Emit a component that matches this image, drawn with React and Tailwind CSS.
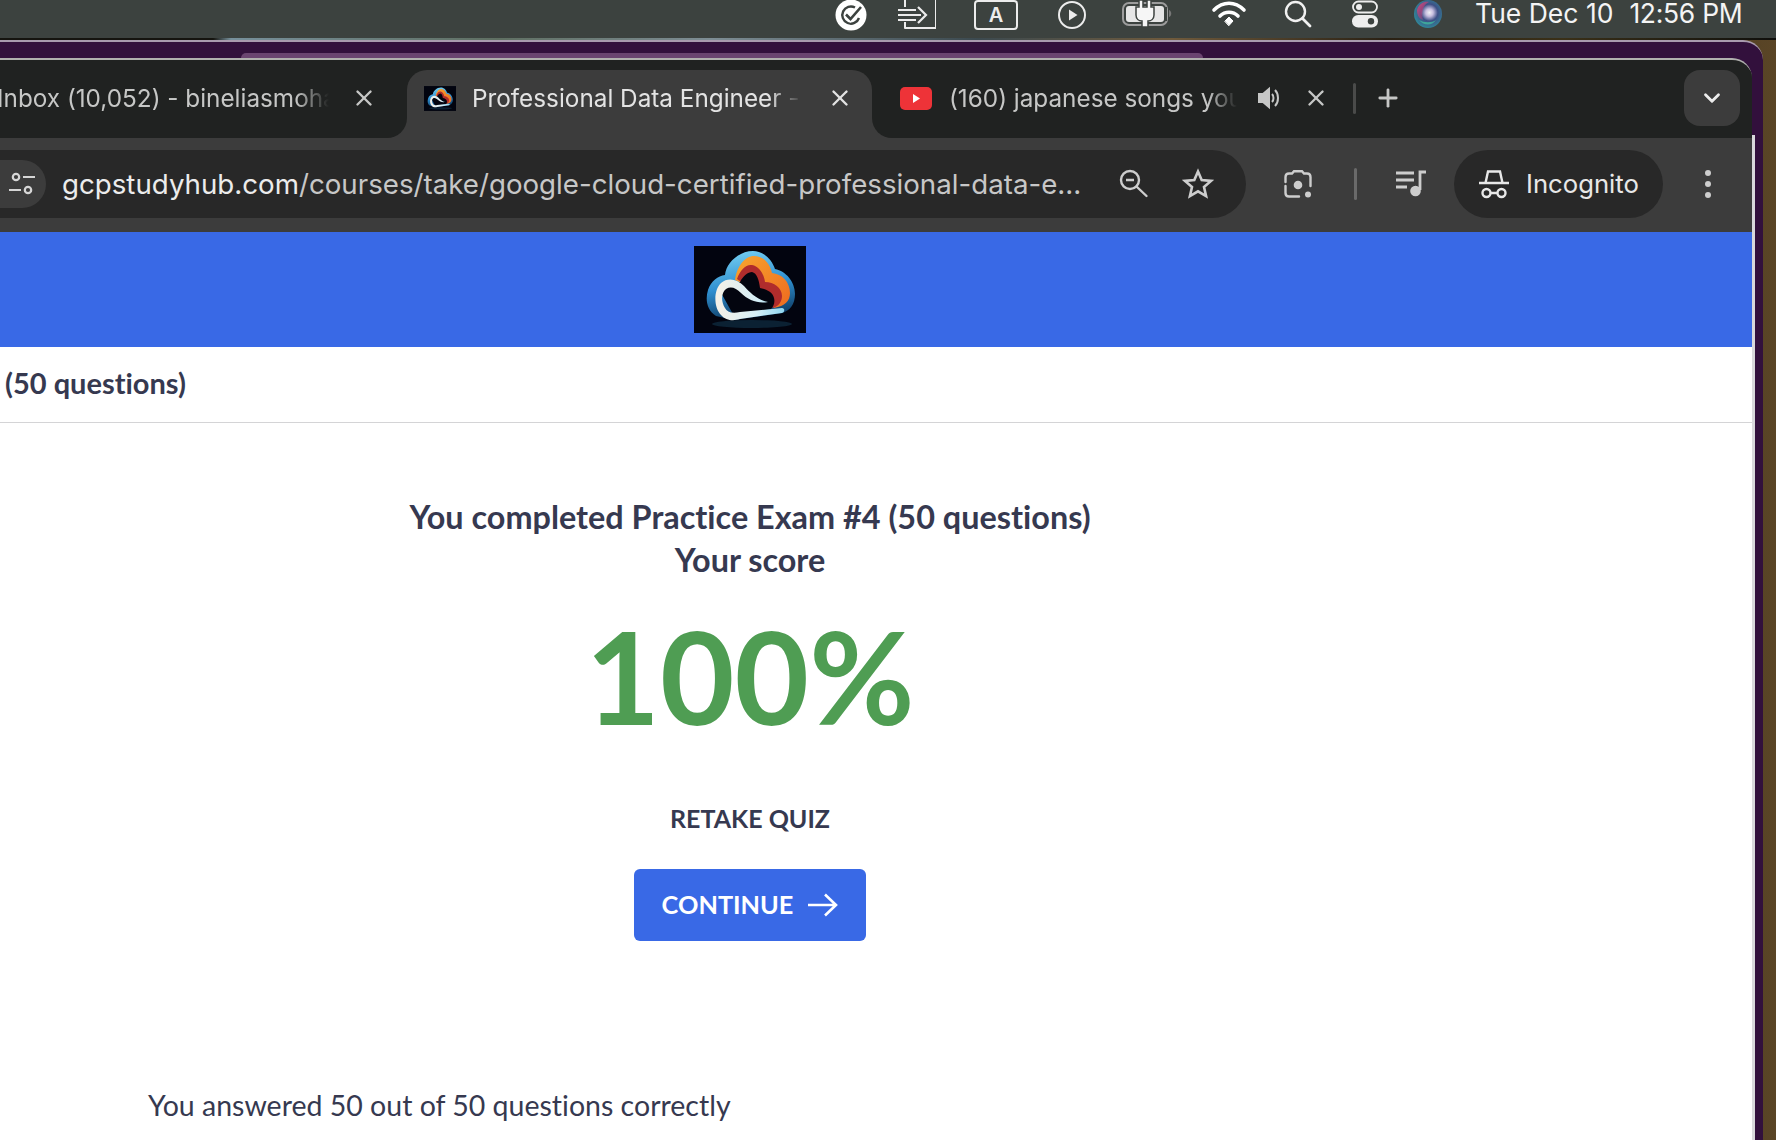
import React from "react";
import { X, Plus, ChevronDown } from "lucide-react";

function Logo({ className, id }) {
  return (
    <svg viewBox="0 0 112 87" className={className}>
      <defs>
        <linearGradient id={id + "b"} x1="0.1" y1="0" x2="0.3" y2="1">
          <stop offset="0" stopColor="#7ad4f5" />
          <stop offset="0.55" stopColor="#2f8fd0" />
          <stop offset="1" stopColor="#0f3f68" />
        </linearGradient>
        <linearGradient id={id + "o"} x1="0" y1="0" x2="1" y2="1">
          <stop offset="0" stopColor="#f8a52e" />
          <stop offset="1" stopColor="#ee6a1f" />
        </linearGradient>
        <linearGradient id={id + "w"} x1="0" y1="0" x2="1" y2="0">
          <stop offset="0" stopColor="#f6f1e6" />
          <stop offset="0.6" stopColor="#d6eef6" />
          <stop offset="1" stopColor="#8fd6f0" />
        </linearGradient>
      </defs>
      <rect width="112" height="87" fill="#02040f" />
      <ellipse cx="58" cy="78" rx="40" ry="4" fill="#0b2133" />
      <path d="M22 70C13 64 11 54 14 44C17 35 24 30 31 29C32 17 45 5 59 5C70 5 78 14 81 23C92 25 101 36 101 48C101 58 96 65 88 67L40 74Z" fill={`url(#${id}b)`} />
      <path d="M41 34C43 20 51 10 60 10C70 10 76 18 78 27C88 28 96 36 96 47C96 55 91 60 80 62L70 50L50 38Z" fill={`url(#${id}o)`} />
      <path d="M43 33C46 24 52 18 58 19C65 20 70 28 71 36C80 36 88 42 88 50C88 55 85 60 79 62L70 50L50 38Z" fill="#b02c2c" />
      <path d="M46 36C49 30 54 26 58 26C63 27 65 34 66 42C72 43 79 46 80 52C81 56 80 60 77 63L40 70L26 45Z" fill="#03050f" />
      <path d="M74 56C64 54 56 47 50 40C43 33 34 31 27 37C19 45 20 62 27 69C32 75 40 75 46 73L88 67C91 66 91 62 88 62L46 66C38 68 33 66 31 62C27 56 27 47 32 43C37 40 42 42 47 47C54 54 64 58 74 56Z" fill={`url(#${id}w)`} />
    </svg>
  );
}

function MenuIcons() {
  return (
    <>
      <svg viewBox="0 0 32 32" className="w-[32px] h-[32px] absolute left-[835px] top-[-1px]" fill="none">
        <circle cx="16" cy="16" r="15.500" fill="#fff" />
        <path d="M24 19A8.600 8.600 0 1 1 20 8.500" stroke="#3c423f" strokeWidth="2.400" />
        <path d="M11 15.500l4.500 4.500L26 8" stroke="#fff" strokeWidth="5" />
        <path d="M11 15.500l4.500 4.500L26 8" stroke="#3c423f" strokeWidth="2.600" />
      </svg>
      <svg viewBox="0 0 38 30" className="w-[38px] h-[30px] absolute left-[898px] top-0" fill="none" stroke="#ececec" strokeWidth="2">
        <path d="M7 7V-2h31v30H7v-6" strokeLinejoin="round" />
        <path d="M0 10h18M0 15h23M0 20h18M20 7l8 8-8 8" strokeWidth="2.200" />
      </svg>
      <div className="w-[44px] h-[30px] absolute left-[974px] top-0 border-2 border-[#ececec] rounded-[4px] flex items-center justify-center text-[20px] leading-none font-semibold text-[#ececec] font-['Inter',sans-serif]">A</div>
      <svg viewBox="0 0 30 30" className="w-[30px] h-[30px] absolute left-[1057px] top-0" fill="none">
        <circle cx="15" cy="15" r="13" stroke="#ececec" strokeWidth="2" />
        <path d="M12 9.500l8.500 5.500-8.500 5.500z" fill="#ececec" />
      </svg>
      <svg viewBox="0 0 52 28" className="w-[52px] h-[28px] absolute left-[1122px] top-0" fill="none">
        <rect x="1" y="3" width="44" height="22" rx="6" stroke="#9c9c9c" strokeWidth="2" />
        <rect x="4" y="6" width="38" height="16" rx="3" fill="#e6e6e6" />
        <path d="M42 7h3v14h-3z" fill="#3c423f" />
        <path d="M47 10c3 1 3 6 0 7z" fill="#777" />
        <path d="M17 0h4v7h4V0h4v7h3v8c0 4-3 6-6 6v6h-6v-6c-3 0-6-2-6-6V7h3z" fill="#f6f6f6" stroke="#3c423f" strokeWidth="1.500" />
      </svg>
      <svg viewBox="0 0 36 28" className="w-[36px] h-[28px] absolute left-[1211px] top-0" fill="none" stroke="#fff" strokeWidth="3.600" strokeLinecap="round">
        <path d="M3 10C12 1 24 1 33 10M9 16C14 11 22 11 27 16" />
        <path d="M14 21l4-4 4 4-4 4.500z" fill="#fff" strokeWidth="1" />
      </svg>
      <svg viewBox="0 0 28 28" className="w-[28px] h-[28px] absolute left-[1284px] top-0" fill="none" stroke="#f1f1f1" strokeWidth="2.400">
        <circle cx="11.500" cy="11.500" r="9.500" />
        <path d="M18.500 18.500l7.500 7.500" strokeWidth="2.800" strokeLinecap="round" />
      </svg>
      <svg viewBox="0 0 26 28" className="w-[26px] h-[28px] absolute left-[1352px] top-0">
        <rect x="1" y="1.500" width="24" height="11" rx="5.500" fill="none" stroke="#eee" strokeWidth="1.800" />
        <circle cx="7" cy="7" r="3" fill="#eee" />
        <rect x="0" y="15" width="26" height="12.500" rx="6.200" fill="#eee" />
        <circle cx="19" cy="21.200" r="3.200" fill="#3c423f" />
      </svg>
      <svg viewBox="0 0 28 28" className="w-[28px] h-[28px] absolute left-[1414px] top-0">
        <defs>
          <radialGradient id="siri" cx="0.55" cy="0.45" r="0.6">
            <stop offset="0" stopColor="#f0f0f4" />
            <stop offset="0.22" stopColor="#c8bfe0" />
            <stop offset="0.5" stopColor="#3d4f86" />
            <stop offset="1" stopColor="#2e8f9c" />
          </radialGradient>
          <linearGradient id="siri2" x1="0" y1="0" x2="1" y2="1">
            <stop offset="0" stopColor="#d53f78" />
            <stop offset="1" stopColor="#d53f78" stopOpacity="0" />
          </linearGradient>
        </defs>
        <circle cx="14" cy="14" r="14" fill="url(#siri)" />
        <path d="M3 10C5 3 11 1 15 2C9 5 7 11 9 20C5 19 3 15 3 10Z" fill="url(#siri2)" />
        <path d="M5 20C10 26 18 26 22 20C18 23 10 23 5 20Z" fill="#3fa69a" />
      </svg>
    </>
  );
}

function TabTitle({ children, className }) {
  return (
    <span className={"block overflow-hidden whitespace-nowrap font-['Inter',sans-serif] text-[24.3px] leading-[32px] [mask-image:linear-gradient(to_right,#000_90%,transparent)] " + className}>
      {children}
    </span>
  );
}

export default function App() {
  return (
    <div className="relative w-[1776px] h-[1140px] overflow-hidden bg-[linear-gradient(90deg,#1d1810,#4a3a20_40%,#1c1a12_70%,#5a4526)] font-['Lato',sans-serif] [font-variant-ligatures:none]">
      {/* Menu bar */}
      <div className="relative h-[38px] bg-[#3c423f]">
        <MenuIcons />
        <div className="absolute left-[1475px] top-0 h-[26px] flex items-center text-[26.5px] leading-[26px] text-[#f4f4f4] font-['Inter',sans-serif] whitespace-pre">
          <span>Tue Dec 10</span>
          <span className="ml-[16px] tracking-[-0.3px]">12:56 PM</span>
        </div>
      </div>
      <div className="h-[2px] bg-[linear-gradient(90deg,#15140f_0%,#15140f_12%,#77909b_13%,#5f6f62_28%,#7d8d94_40%,#3c4a50_55%,#6f5a3c_66%,#2a2114_78%,#3a3018_88%,#0f0f0c_100%)]" />

      {/* Purple desktop window behind */}
      <div className="mr-[13px] h-[1100px] rounded-tr-[20px] border-t-2 border-[#a89aae] bg-[#32103c] pt-[11px]">
        <div className="ml-[241px] w-[962px] h-[5px] rounded-t-[8px] bg-[#6a4470]" />
        <div className="flex">
          {/* Browser */}
          <div className="w-[1752px] shrink-0 rounded-tr-[20px] overflow-hidden border-t-2 border-[#b0b0ae] bg-[#202221]">
            {/* Tab strip */}
            <div className="pt-[10px]">
              <div className="flex h-[68px] bg-[#3c3c3c]">
                <div className="w-[407px] shrink-0 bg-[#202221] rounded-br-[20px] flex items-start pt-[12px] text-[#c6c7c6]">
                  <TabTitle className="w-[332px] ml-[-3px]">Inbox (10,052) - bineliasmoha</TabTitle>
                  <X className="w-[26px] h-[26px] ml-[22px] mt-[3px]" strokeWidth={2.2} />
                </div>
                <div className="w-[465px] shrink-0 bg-[#202221]">
                  <div className="h-[68px] bg-[#3c3c3c] rounded-t-[20px] flex items-start pt-[12px] text-[#e3e3e3]">
                    <Logo id="fav" className="w-[32px] h-[25px] ml-[17px] mt-[4px] shrink-0" />
                    <TabTitle className="w-[330px] ml-[16px]">Professional Data Engineer - (</TabTitle>
                    <X className="w-[26px] h-[26px] ml-[25px] mt-[3px]" strokeWidth={2.2} />
                  </div>
                </div>
                <div className="flex-1 bg-[#202221] rounded-bl-[20px] flex items-start pt-[12px] text-[#c6c7c6]">
                  <svg viewBox="0 0 32 23" className="w-[32px] h-[23px] ml-[28px] mt-[5px] shrink-0">
                    <rect width="32" height="23" rx="5" fill="#ee3338" />
                    <path d="M13 7l7 4.500-7 4.500z" fill="#fff" />
                  </svg>
                  <TabTitle className="w-[288px] ml-[17px]">(160) japanese songs you will love</TabTitle>
                  <svg viewBox="0 0 24 26" className="w-[24px] h-[26px] ml-[20px] mt-[3px] shrink-0" fill="none" stroke="#c6c7c6" strokeWidth="2">
                    <path d="M2 9v8h4l6 5V4L6 9z" fill="#c6c7c6" />
                    <path d="M15 9c2 2 2 6 0 8M18 5c4 4 4 12 0 16" />
                  </svg>
                  <X className="w-[26px] h-[26px] ml-[22px] mt-[3px] shrink-0" strokeWidth={2.2} />
                  <div className="w-[3px] h-[31px] ml-[24px] mt-[1px] rounded bg-[#4a4b4a] shrink-0" />
                  <Plus className="w-[28px] h-[28px] ml-[18px] mt-[2px] shrink-0" strokeWidth={2.4} />
                  <div className="w-[56px] h-[56px] ml-[282px] mt-[-12px] mr-[12px] rounded-[16px] bg-[#3c3c3c] flex items-center justify-center shrink-0">
                    <ChevronDown className="w-[26px] h-[26px] text-[#ececec]" strokeWidth={2.6} />
                  </div>
                </div>
              </div>
            </div>
            {/* Toolbar */}
            <div className="h-[94px] bg-[#3c3c3c] pt-[12px] flex items-start">
              <div className="w-[1246px] h-[68px] rounded-r-full bg-[#282828] flex items-center shrink-0">
                <div className="w-[46px] h-[48px] rounded-r-full bg-[#3c3c3c] flex items-center justify-center shrink-0">
                  <svg viewBox="0 0 26 26" className="w-[26px] h-[26px] ml-[-2px]" fill="none" stroke="#d6d6d6" strokeWidth="2.200">
                    <circle cx="7" cy="6" r="3.200" />
                    <path d="M14 6h12M0 19h12" />
                    <circle cx="19" cy="19" r="3.200" />
                  </svg>
                </div>
                <span className="ml-[16px] mt-[2px] w-[1020px] shrink-0 whitespace-nowrap font-['Inter',sans-serif] text-[27.7px] text-[#c7c7c7]">
                  <span className="text-[#ececec]">gcpstudyhub.com</span>/courses/take/google-cloud-certified-professional-data-e...
                </span>
                <svg viewBox="0 0 30 30" className="w-[30px] h-[30px] ml-[37px] shrink-0" fill="none" stroke="#cdcdcd" strokeWidth="2.400">
                  <circle cx="11" cy="11" r="9" />
                  <path d="M7 11h8" strokeWidth="2.600" />
                  <path d="M17.500 17.500l10 9.500" strokeLinecap="round" />
                </svg>
                <svg viewBox="0 0 32 32" className="w-[32px] h-[32px] ml-[33px] shrink-0" fill="none" stroke="#cdcdcd" strokeWidth="2.600">
                  <path d="M16 3.500l3.700 8.600 9.300.8-7 6.100 2.100 9.100L16 23.300l-8.100 4.800 2.100-9.100-7-6.100 9.300-.8z" strokeLinejoin="miter" />
                </svg>
              </div>
              <div className="flex items-center h-[68px]">
                <svg viewBox="0 0 28 28" className="w-[28px] h-[28px] ml-[38px]" fill="none" stroke="#cdcdcd" strokeWidth="2.400" strokeLinecap="round">
                  <path d="M1.500 12V7c0-2 1.500-3.500 3.500-3.500h3l2-2.300h8l2 2.300h3c2 0 3.500 1.500 3.500 3.500v9" />
                  <path d="M1.500 16v7c0 2 1.500 3.500 3.500 3.500h10" />
                  <circle cx="14" cy="15" r="4.300" fill="#cdcdcd" stroke="none" />
                  <circle cx="24" cy="24.500" r="3" fill="#cdcdcd" stroke="none" />
                </svg>
                <div className="w-[3px] h-[32px] ml-[42px] bg-[#6a6a6a] rounded" />
                <svg viewBox="0 0 32 28" className="w-[32px] h-[28px] ml-[38px]" fill="none" stroke="#cdcdcd" strokeWidth="2.800">
                  <path d="M1 3h18M1 10h18M1 17h11" />
                  <path d="M25 20V2h6" />
                  <circle cx="20.500" cy="21" r="5.300" fill="#cdcdcd" stroke="none" />
                </svg>
                <div className="w-[209px] h-[68px] ml-[27px] rounded-full bg-[#282828] flex items-center shrink-0">
                  <svg viewBox="0 0 30 30" className="w-[30px] h-[30px] ml-[25px]" fill="none" stroke="#e8e8e8" strokeWidth="2.400">
                    <path d="M6.500 14L9 2.500h12L23.500 14M0 14h30" />
                    <circle cx="7.500" cy="24" r="4" />
                    <circle cx="22.500" cy="24" r="4" />
                    <path d="M11.500 24h7" />
                  </svg>
                  <span className="ml-[17px] mt-[1px] font-['Inter',sans-serif] text-[25.7px] text-[#e8e8e8]">Incognito</span>
                </div>
                <div className="ml-[42px] flex flex-col gap-[5px]">
                  <span className="w-[6px] h-[6px] rounded-full bg-[#cdcdcd]" />
                  <span className="w-[6px] h-[6px] rounded-full bg-[#cdcdcd]" />
                  <span className="w-[6px] h-[6px] rounded-full bg-[#cdcdcd]" />
                </div>
              </div>
            </div>
            {/* Page */}
            <div className="bg-white h-[910px]">
              <div className="h-[115px] bg-[#3969e6] flex items-center">
                <div className="w-[1500px] flex justify-center">
                  <Logo id="main" className="w-[112px] h-[87px]" />
                </div>
              </div>
              <div className="h-[76px] border-b border-[#d4d4d6] pl-[5px] pb-[4px] flex items-center text-[29px] font-bold text-[#363950]">
                (50 questions)
              </div>
              <div className="w-[1500px] flex flex-col items-center text-[#363950] pt-[72px]">
                <div className="text-[32.4px] leading-[43px] font-bold text-center">
                  You completed Practice Exam #4 (50 questions)
                  <br />
                  Your score
                </div>
                <div className="text-[128.5px] leading-[150px] mt-[19px] font-bold text-[#4f9d53]">100%</div>
                <div className="mt-[51px] text-[25px] leading-[34px] font-bold">RETAKE QUIZ</div>
                <button className="mt-[34px] w-[232px] h-[72px] rounded-[6px] bg-[#3969e6] text-white text-[25.3px] font-bold flex items-center justify-center">
                  CONTINUE
                  <svg viewBox="0 0 30 24" className="w-[30px] h-[24px] ml-[15px]" fill="none" stroke="#fff" strokeWidth="2.600">
                    <path d="M0 12h28M17 1.500L28 12 17 22.500" />
                  </svg>
                </button>
              </div>
              <div className="mt-[144px] pl-[148px] text-[28.5px] leading-[40px] text-[#363950]">
                You answered 50 out of 50 questions correctly
              </div>
            </div>
          </div>
          <div className="w-[3px] mt-[77px] h-[1100px] bg-[#d9d9dc]" />
        </div>
      </div>
    </div>
  );
}
